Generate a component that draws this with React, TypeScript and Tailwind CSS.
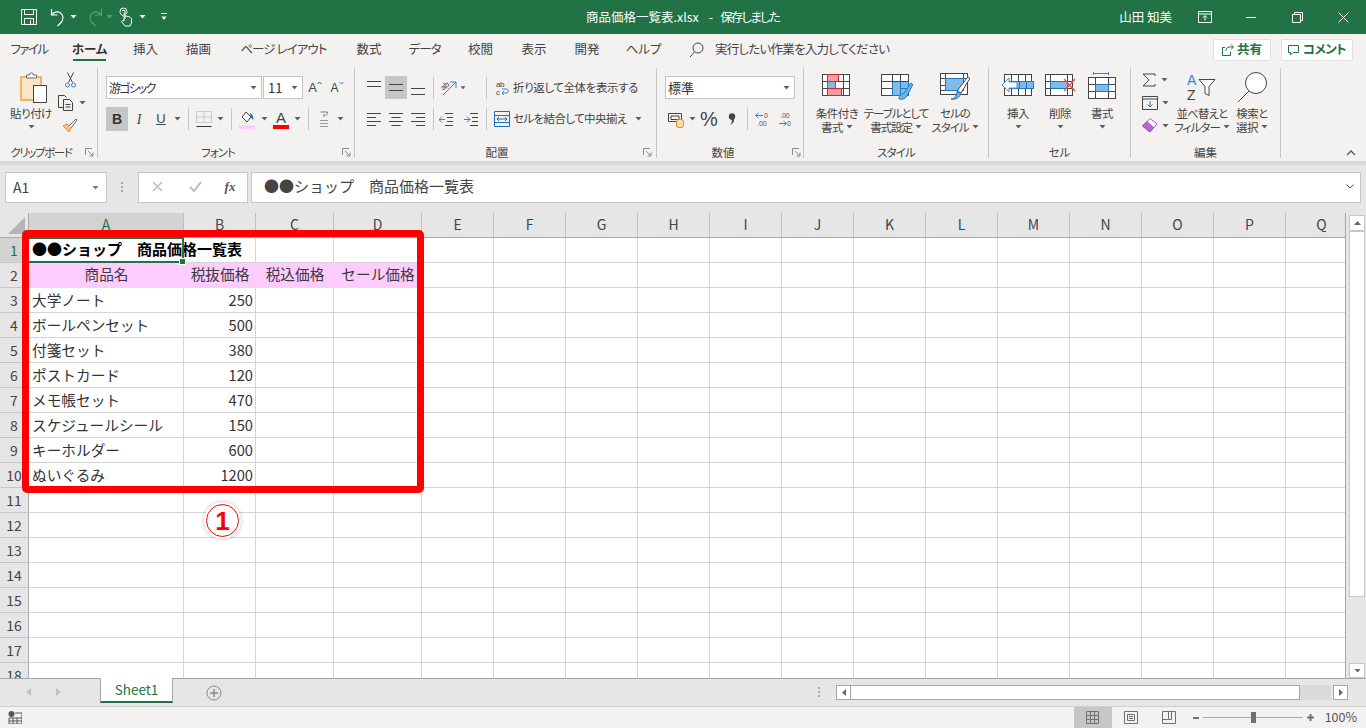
import React from "react";

const Caret = ({ c = "#5f5f5f" }: { c?: string }) => (
  <svg width="7" height="4" viewBox="0 0 7 4"><path d="M0.5 0h6L3.5 3.5z" fill={c} /></svg>
);
const Launcher = () => (
  <svg width="9" height="9" viewBox="0 0 9 9" fill="none" stroke="#8a8a8a">
    <path d="M0.5 7V0.5H7" /><path d="M3 3l4.5 4.5M8 4.5V8H4.5" />
  </svg>
);
const Sep = () => <div className="w-px h-[22px] bg-[#c6c6c6]" />;
const Box = ({ w, children, active }: { w: string; children?: React.ReactNode; active?: boolean }) => (
  <div className={`${w} ${active ? "bg-[#c6c6c6]" : ""} h-full flex items-center justify-center shrink-0`}>{children}</div>
);

const HLines = ({ ys }: { ys: number[] }) => (
  <svg width="15" height="15" viewBox="0 0 15 15" stroke="#444" fill="none">
    {ys.map((y) => <path key={y} d={`M0 ${y + 0.5}H14`} />)}
  </svg>
);
const AlignL = ({ kind }: { kind: "l" | "c" | "r" }) => {
  const d = kind === "l" ? ["M0 1.5H14", "M0 5.5H9", "M0 9.5H14", "M0 13.5H9"] : kind === "c" ? ["M0 1.5H14", "M2.5 5.5H11.5", "M0 9.5H14", "M2.5 13.5H11.5"] : ["M0 1.5H14", "M5 5.5H14", "M0 9.5H14", "M5 13.5H14"];
  return <svg width="15" height="15" viewBox="0 0 15 15" stroke="#444" fill="none">{d.map((p) => <path key={p} d={p} />)}</svg>;
};

const BigGrid = ({ children }: { children?: React.ReactNode }) => (
  <svg width="36" height="32" viewBox="0 0 36 32" fill="none">{children}</svg>
);

const IconCond = () => (
  <BigGrid>
    <rect x="3.5" y="3.5" width="27" height="21" fill="#fff" stroke="#444" />
    <path d="M3.5 10.5h27M3.5 17.5h27M24.500 3.500v21" stroke="#444" />
    <rect x="8.5" y="3.5" width="11" height="7" fill="#ff9aa2" stroke="#d9232e" />
    <rect x="8.5" y="10.5" width="8" height="7" fill="#7fbae8" stroke="#1f77c0" />
    <rect x="8.5" y="17.5" width="14" height="7" fill="#ff9aa2" stroke="#d9232e" />
  </BigGrid>
);
const IconTable = () => (
  <BigGrid>
    <rect x="3.5" y="3.5" width="27" height="21" fill="#fff" stroke="#444" />
    <rect x="14.5" y="10.5" width="16" height="14" fill="#7fbae8" stroke="#1f77c0" />
    <path d="M3.5 10.5h27M3.5 17.5h11M14.5 3.5v7M22.5 3.5v7" stroke="#444" />
    <path d="M22.500 17.500h8M22.500 10.500v14" stroke="#1f77c0" />
    <path d="M21 28c0-4 3-5 5-6l6-9c1-1.500 3-.5 2.500 1l-5 10c-1 3-5 5-8.500 4z" fill="#6fb0e6" stroke="#1f77c0" />
  </BigGrid>
);
const IconStyle = () => (
  <BigGrid>
    <rect x="3.500" y="2.500" width="27" height="21" fill="#fff" stroke="#444" />
    <path d="M3.500 7.500h27M3.500 14.500h5M3.500 19.500h5M8.500 2.500v5M26.500 2.500v5" stroke="#444" />
    <rect x="8.500" y="7.500" width="18" height="12" fill="#7fbae8" stroke="#1f77c0" />
    <path d="M20 20l10-13c1-1.500 3-.5 2.500 1L24 22z" fill="#fff" stroke="#444" />
    <path d="M14 28c3 0 5-2 6-7l4 1c-1 4-5 7-10 6z" fill="#6fb0e6" stroke="#1f77c0" />
  </BigGrid>
);
const IconInsert = () => (
  <svg width="34" height="32" viewBox="0 0 34 32" fill="none">
    <rect x="3.500" y="3.500" width="27" height="21" fill="#fff" stroke="#444" />
    <path d="M3.500 10.500h27M3.500 17.500h27M10.500 3.500v21M17.500 3.500v21M24.500 3.500v21" stroke="#444" />
    <rect x="9.500" y="10.500" width="23" height="7" fill="#7fbae8" stroke="#1f77c0" />
    <path d="M18.500 10.500v7M25.500 10.500v7" stroke="#1f77c0" />
    <path d="M8 7L1 14l7 7v-4h8v-6H8z" fill="#fff" stroke="#3b95dc" />
  </svg>
);
const IconDelete = () => (
  <svg width="34" height="32" viewBox="0 0 34 32" fill="none">
    <rect x="2.500" y="3.500" width="27" height="21" fill="#fff" stroke="#444" />
    <path d="M2.500 10.500h27M2.500 17.500h27M7.500 3.500v21M24.500 3.500v21" stroke="#444" />
    <rect x="7.500" y="10.500" width="17" height="7" fill="#7fbae8" stroke="#1f77c0" />
    <path d="M21 8l11 12M32 8L21 20" stroke="#f0494c" strokeWidth="1.300" />
  </svg>
);
const IconFormat = () => (
  <svg width="30" height="32" viewBox="0 0 30 32" fill="none">
    <path d="M6.500 1v3M6.500 2.500h15M21.500 1v3" stroke="#2f86d0" />
    <rect x="1.500" y="6.500" width="27" height="21" fill="#fff" stroke="#444" />
    <path d="M1.500 13.500h27M1.500 20.500h27M8.500 6.500v21M21.500 6.500v21" stroke="#444" />
    <rect x="8.500" y="13.500" width="13" height="7" fill="#7fbae8" stroke="#1f77c0" />
  </svg>
);

const BigBtn = ({ w, icon, l1, l2, caret2, track }: { w: string; icon: React.ReactNode; l1: string; l2?: string; caret2?: boolean; track?: string }) => (
  <div className={`${w} flex flex-col items-center shrink-0 text-[11.5px] ${track ?? "tracking-[-0.5px]"}`}>
    <div className="h-[38px] flex items-center justify-center">{icon}</div>
    <div className="h-[14px] leading-[14px] whitespace-nowrap">{l1}</div>
    <div className="h-[14px] leading-[14px] whitespace-nowrap flex items-center gap-[3px]">
      {l2 && <span>{l2}</span>}
      {caret2 && <Caret />}
    </div>
  </div>
);

const Combo = ({ w, text, textClass }: { w: string; text: string; textClass?: string }) => (
  <div className={`${w} h-[23px] bg-white border border-[#c6c6c6] flex items-center justify-between pl-[2px] pr-[4px] shrink-0`}>
    <span className={`text-[#333] ${textClass ?? "text-[12px]"}`}>{text}</span>
    <Caret />
  </div>
);

const Group = ({ w, label, labelW, launcher, children, labelTrack }: { w: string; label: string; labelW: string; launcher?: boolean; children: React.ReactNode; labelTrack?: string }) => (
  <div className={`${w} h-[90px] border-r border-[#c6c6c6] flex flex-col shrink-0`}>
    <div className="h-[78px]">{children}</div>
    <div className="h-[12px] flex items-center">
      <div className={`${labelW} ${labelTrack ?? ""} text-center text-[11.5px] leading-[12px] text-[#444] whitespace-nowrap`}>{label}</div>
      {launcher && <div className="flex-1 flex justify-center"><Launcher /></div>}
    </div>
  </div>
);

const tabs: [string, string][] = [
  ["ファイル", "w-[58px] tracking-[-1.6px]"], ["ホーム", "w-[63px]"], ["挿入", "w-[49px]"], ["描画", "w-[57px]"], ["ページ レイアウト", "w-[113px] tracking-[-0.9px]"],
  ["数式", "w-[58px]"], ["データ", "w-[53px] tracking-[-1px]"], ["校閲", "w-[59px]"], ["表示", "w-[48px]"], ["開発", "w-[58px]"], ["ヘルプ", "w-[55px]"],
];

const colNames = ["A", "B", "C", "D", "E", "F", "G", "H", "I", "J", "K", "L", "M", "N", "O", "P", "Q"];
const items: [string, string][] = [
  ["大学ノート", "250"], ["ボールペンセット", "500"], ["付箋セット", "380"], ["ポストカード", "120"],
  ["メモ帳セット", "470"], ["スケジュールシール", "150"], ["キーホルダー", "600"], ["ぬいぐるみ", "1200"],
];
const heads = ["商品名", "税抜価格", "税込価格", "セール価格"];

const Sheet = () => {
  const rows = Array.from({ length: 18 }, (_, i) => i + 1);
  return (
    <div className="flex-1 min-w-0 overflow-hidden grid grid-cols-[29px_155px_72px_78px_88px_repeat(13,72px)] auto-rows-[25px] bg-white">
      <div className="bg-[#e6e6e6] border-r border-b border-[#ababab] flex items-end justify-end pr-[3px] pb-[3px]">
        <svg width="17" height="17" viewBox="0 0 17 17"><path d="M17 0v17H0z" fill="#b5b5b5" /></svg>
      </div>
      {colNames.map((c, i) => (
        <div key={c} className={`${i === 0 ? "bg-[#d2d2d2] text-[#217346]" : "bg-[#e6e6e6] text-[#444]"} border-r border-b border-r-[#c0c0c0] border-b-[#ababab] flex items-center justify-center pb-[1px] text-[14px]`}>
          {c}
        </div>
      ))}
      {rows.map((r) => (
        <React.Fragment key={r}>
          <div className={`${r === 1 ? "bg-[#d2d2d2] text-[#217346]" : "bg-[#e6e6e6] text-[#444]"} border-r border-b border-r-[#ababab] border-b-[#c6c6c6] flex items-center justify-center text-[14px]`}>
            {r}
          </div>
          {colNames.map((_, ci) => {
            const item = r >= 3 && r <= 10 ? items[r - 3] : null;
            if (r === 1 && ci === 0) {
              return (
                <div key={ci} className="relative z-10 border-r border-b border-[#d4d4d4] flex items-center pl-[3px] pb-[1px] text-[15px] font-bold text-black whitespace-nowrap">
                  <span className="relative">●●ショップ　商品価格一覧表</span>
                  <div className="absolute top-[-1px] left-0 right-[-1px] bottom-[-1px] border-y-2 border-r-2 border-[#217346]" />
                  <div className="absolute right-[-3px] bottom-[-3px] w-[5px] h-[5px] bg-[#217346] border border-white box-content" />
                </div>
              );
            }
            if (r === 2 && ci < 4) {
              return (
                <div key={ci} className="bg-[#ffccff] flex items-center justify-center pb-[3px] text-[14.67px] text-[#3a3a3a] whitespace-nowrap overflow-hidden">
                  {heads[ci]}
                </div>
              );
            }
            if (item && ci === 0) {
              return <div key={ci} className="border-r border-b border-[#d4d4d4] flex items-center pl-[3px] pb-[1px] text-[14.67px] text-[#333] whitespace-nowrap">{item[0]}</div>;
            }
            if (item && ci === 1) {
              return <div key={ci} className="border-r border-b border-[#d4d4d4] flex items-center justify-end pr-[2px] text-[14.67px] text-[#333]">{item[1]}</div>;
            }
            return <div key={ci} className="border-r border-b border-[#d4d4d4]" />;
          })}
        </React.Fragment>
      ))}
    </div>
  );
};

export default function App() {
  return (
    <div className="relative w-[1366px] h-[728px] overflow-hidden flex flex-col bg-[#e6e6e6] text-[12px] text-[#444] [font-family:'Noto_Sans_CJK_JP','Noto_Sans',sans-serif] [font-feature-settings:'palt']">
      {/* Title bar */}
      <div className="h-[34px] shrink-0 bg-[#217346] flex items-center text-white">
        <div className="flex-1 flex items-center">
          <Box w="w-[58px]">
            <svg width="18" height="18" viewBox="0 0 18 18" fill="none" stroke="#fff">
              <path d="M1.500 1.500h15v15h-15z" /><path d="M4.500 1.500v5h9v-5M4.500 16.500v-6h9v6M10.500 12v4.500" />
            </svg>
          </Box>
          <svg width="16" height="20" viewBox="0 0 16 20" fill="none" stroke="#fff" strokeWidth="1.200" className="ml-[-8px]">
            <path d="M1.500 2v6h6" /><path d="M1.500 8c2-3 6-4 9-2s3 6 1 9l-4 4" />
          </svg>
          <span className="ml-[4px]"><Caret c="#fff" /></span>
          <svg width="16" height="20" viewBox="0 0 16 20" fill="none" stroke="#5d9c7b" strokeWidth="1.200" className="ml-[10px]">
            <path d="M14.500 2v6h-6" /><path d="M14.500 8c-2-3-6-4-9-2s-3 6-1 9l4 4" />
          </svg>
          <span className="ml-[3px]"><Caret c="#5d9c7b" /></span>
          <svg width="14" height="20" viewBox="0 0 14 20" fill="none" stroke="#fff" className="ml-[6px]">
            <path d="M4 9c-2-1-3-3-3-4.500a3.500 3.500 0 0 1 7 0c0 1-.5 2-1 2.500" /><path d="M3 3.500h3v8.500M6 9c2 0 6 1 6.500 2.500V16l-1.500 3H6L2.500 14.500l1-1L5 14V6" />
          </svg>
          <span className="ml-[6px]"><Caret c="#fff" /></span>
          <svg width="8" height="8" viewBox="0 0 8 8" className="ml-[14px]" stroke="#fff" fill="#fff">
            <path d="M1 .5h6" fill="none" /><path d="M1.500 3.500h5L4 7z" stroke="none" />
          </svg>
        </div>
        <div className="shrink-0 text-[12.5px] whitespace-pre flex w-[194px]">
          <span>商品価格一覧表.xlsx</span>
          <span className="ml-[10px]">-</span>
          <span className="ml-[7px] tracking-[-1.8px]">保存しました</span>
        </div>
        <div className="flex-1 flex items-center justify-end">
          <span className="text-[12.5px] mr-[10px]">山田 知美</span>
          <Box w="w-[46px]">
            <svg width="14" height="12" viewBox="0 0 14 12" fill="none" stroke="#fff"><path d="M.5 .5h13v11H.5zM.5 3h13" /><path d="M7 9.500V5M5 6.500L7 4.500l2 2" /></svg>
          </Box>
          <Box w="w-[46px]"><div className="w-[10px] h-px bg-white" /></Box>
          <Box w="w-[46px]">
            <svg width="11" height="11" viewBox="0 0 11 11" fill="none" stroke="#fff"><path d="M.5 2.500h8v8h-8zM2.500 2.500v-2h8v8h-2" /></svg>
          </Box>
          <Box w="w-[46px]">
            <svg width="11" height="11" viewBox="0 0 11 11" fill="none" stroke="#fff"><path d="M.5 .5l10 10M10.500 .5l-10 10" /></svg>
          </Box>
        </div>
      </div>

      {/* Tabs */}
      <div className="h-[31px] shrink-0 bg-[#f3f2f1] flex items-center text-[12.5px]">
        {tabs.map(([t, w]) => (
          <div key={t} className={`${w} h-full flex items-center justify-center relative whitespace-nowrap shrink-0 ${t === "ホーム" ? "font-bold text-[#333]" : ""}`}>
            {t}
            {t === "ホーム" && <div className="absolute bottom-[4px] left-[15px] right-[15px] h-[2px] bg-[#217346]" />}
          </div>
        ))}
        <svg width="15" height="16" viewBox="0 0 15 16" fill="none" stroke="#444" className="ml-[18px]">
          <circle cx="9" cy="6" r="5" /><path d="M5.500 10L1 15" />
        </svg>
        <span className="ml-[11px] tracking-[-0.75px]">実行したい作業を入力してください</span>
        <div className="flex-1" />
        <div className="w-[58px] h-[22px] bg-white border border-[#e2e2e2] rounded-[2px] flex items-center justify-center gap-[3px] text-[#217346] font-bold">
          <svg width="12" height="12" viewBox="0 0 12 12" fill="none" stroke="#217346"><path d="M9 .5l2.500 2.500L9 5.500M11 3H7C5 3 4 4.500 4 7" /><path d="M8.500 7.500v4h-8v-8H3" /></svg>
          共有
        </div>
        <div className="ml-[10px] mr-[13px] w-[72px] h-[22px] bg-white border border-[#e2e2e2] rounded-[2px] flex items-center justify-center gap-[3px] text-[#217346] font-bold tracking-[-0.5px]">
          <svg width="12" height="12" viewBox="0 0 12 12" fill="none" stroke="#217346"><path d="M.5 1.500h10v7H5L2.500 11V8.500h-2z" /></svg>
          コメント
        </div>
      </div>

      {/* Ribbon */}
      <div className="h-[96px] shrink-0 bg-[#f3f2f1] pt-[3px] flex">
        <Group w="w-[98px]" label="クリップボード" labelW="w-[82px]" labelTrack="tracking-[-1.4px]" launcher>
          <div className="flex">
            <BigBtn
              w="w-[62px]"
              l1="貼り付け"
              icon={
                <svg width="30" height="34" viewBox="0 0 30 34" fill="none" className="ml-[3px]">
                  <rect x="3" y="7" width="20" height="23" fill="#fbe5c8" stroke="#f2a13c" strokeWidth="1.500" />
                  <path d="M8.500 8V5h3a2 2 0 0 1 4 0h3v3z" fill="#fff" stroke="#666" />
                  <rect x="15.500" y="15.500" width="13" height="17" fill="#fff" stroke="#444" />
                </svg>
              }
              caret2
            />
            <div className="flex flex-col">
              <div className="h-[23px] w-[26px] ml-[-5px] flex items-center justify-center">
                <svg width="11" height="16" viewBox="0 0 11 16" fill="none">
                  <path d="M2.500 .5l5 10M8.500 .5l-5 10" stroke="#444" /><circle cx="2.500" cy="13" r="2" stroke="#2f86d0" /><circle cx="8.500" cy="13" r="2" stroke="#2f86d0" />
                </svg>
              </div>
              <div className="h-[23px] ml-[-4px] flex items-center gap-[5px]">
                <svg width="16" height="16" viewBox="0 0 16 16" fill="none" stroke="#444"><path d="M5 12.500H.5V.5h6l2 2" /><path d="M5.500 4.500h6l3 3v8h-9zM7.500 9.500h5M7.500 12h5" /></svg>
                <Caret />
              </div>
              <div className="h-[23px] w-[26px] ml-[-5px] flex items-center justify-center">
                <svg width="16" height="15" viewBox="0 0 16 15" fill="none">
                  <path d="M1 8l6 6 2-4-4-4z" fill="#fbc27a" stroke="#ec8a1d" /><path d="M7 8l7-7 1 1-6 8" fill="#fff" stroke="#666" />
                </svg>
              </div>
            </div>
          </div>
        </Group>

        <Group w="w-[257px]" label="フォント" labelW="w-[240px]" labelTrack="tracking-[-1px]" launcher>
          <div className="pt-[8px] pl-[8px] flex flex-col gap-[8px]">
            <div className="h-[23px] flex">
              <Combo w="w-[156px]" text="游ゴシック" textClass="text-[12px] tracking-[-1.8px]" />
              <Combo w="w-[40px] ml-[1px]" text="11" textClass="text-[13px] pl-[2px]" />
              <Box w="w-[22px] ml-[1px]">
                <span className="text-[13px] [font-family:'Liberation_Sans',sans-serif]">A</span>
                <svg width="5" height="4" viewBox="0 0 5 4" fill="none" stroke="#444" className="mb-[9px]"><path d="M.5 3L2.500 1l2 2" /></svg>
              </Box>
              <Box w="w-[22px]">
                <span className="text-[12px] [font-family:'Liberation_Sans',sans-serif]">A</span>
                <svg width="5" height="4" viewBox="0 0 5 4" fill="none" stroke="#2f86d0" className="mb-[9px]"><path d="M.5 1L2.500 3l2-2" /></svg>
              </Box>
            </div>
            <div className="h-[24px] flex">
              <Box w="w-[22px]" active><span className="font-bold text-[14px] text-[#333] [font-family:'Liberation_Sans',sans-serif]">B</span></Box>
              <Box w="w-[22px]"><span className="italic text-[14px] [font-family:'Liberation_Serif',serif]">I</span></Box>
              <Box w="w-[22px]"><span className="underline text-[13px] [font-family:'Liberation_Sans',sans-serif]">U</span></Box>
              <Box w="w-[10px]"><Caret /></Box>
              <Box w="w-[12px]"><Sep /></Box>
              <Box w="w-[19px]">
                <svg width="16" height="16" viewBox="0 0 16 16" fill="none">
                  <path d="M.5 .5h15v11H.5zM8 .5v11M.5 6h15" stroke="#aaa" strokeDasharray="1 1" /><path d="M.5 15.500h15" stroke="#333" />
                </svg>
              </Box>
              <Box w="w-[14px]"><Caret /></Box>
              <Box w="w-[8px]"><Sep /></Box>
              <Box w="w-[24px]">
                <svg width="16" height="19" viewBox="0 0 16 19" fill="none">
                  <path d="M3 7l4-5 5 5-4 5z" fill="#fff" stroke="#444" /><path d="M11 3c2 1 4 3 3 7-1-1-3-3-3-7z" fill="#1f77c0" /><rect y="15" width="16" height="4" fill="#ffccff" />
                </svg>
              </Box>
              <Box w="w-[10px]"><Caret /></Box>
              <Box w="w-[24px]">
                <div className="flex flex-col items-center">
                  <span className="text-[15px] leading-[15px] [font-family:'Liberation_Sans',sans-serif]">A</span>
                  <div className="w-[16px] h-[4px] bg-[#ff0000]" />
                </div>
              </Box>
              <Box w="w-[8px]"><Caret /></Box>
              <Box w="w-[14px]"><Sep /></Box>
              <Box w="w-[18px]">
                <svg width="10" height="17" viewBox="0 0 10 17" fill="none" stroke="#777"><path d="M1.500 1h7c0 2-1 3-2 4M5 3v3" /><path d="M1 9.500h8M1 12.500h8M1 15.500h8" stroke="#999" /></svg>
              </Box>
              <Box w="w-[14px]"><Caret /></Box>
            </div>
          </div>
        </Group>

        <Group w="w-[302px]" label="配置" labelW="w-[284px]" launcher>
          <div className="pt-[8px] pl-[8px] flex flex-col gap-[8px] text-[11.5px] tracking-[-0.4px]">
            <div className="h-[23px] flex items-center">
              <Box w="w-[22px]"><HLines ys={[1, 6]} /></Box>
              <Box w="w-[22px]" active><HLines ys={[4, 10]} /></Box>
              <Box w="w-[22px]"><HLines ys={[8, 14]} /></Box>
              <Box w="w-[8px]"><Sep /></Box>
              <Box w="w-[23px]">
                <svg width="16" height="16" viewBox="0 0 16 16" fill="none" className="overflow-visible">
                  <path d="M2 15L15 2M9 2h6v6" stroke="#2f86d0" /><text x="1" y="9" fontSize="8" fill="#444" transform="rotate(-40 4 8)" fontFamily="Liberation Sans">ab</text>
                </svg>
              </Box>
              <Box w="w-[6px]"><Caret /></Box>
              <div className="ml-[20px] w-px h-[22px] bg-[#c6c6c6]" />
              <svg width="14" height="16" viewBox="0 0 14 16" fill="none" className="ml-[9px]">
                <text x="0" y="7" fontSize="8" fill="#444" fontFamily="Liberation Sans">ab</text>
                <text x="0" y="15" fontSize="8" fill="#444" fontFamily="Liberation Sans">c</text>
                <path d="M7 13h3c3 0 3-4 0-4H6M8 11l-2 2 2 2" stroke="#2f86d0" />
              </svg>
              <span className="ml-[3px] whitespace-nowrap">折り返して全体を表示する</span>
            </div>
            <div className="h-[24px] flex items-center">
              <Box w="w-[22px]"><AlignL kind="l" /></Box>
              <Box w="w-[22px]"><AlignL kind="c" /></Box>
              <Box w="w-[22px]"><AlignL kind="r" /></Box>
              <Box w="w-[8px]"><Sep /></Box>
              <Box w="w-[21px] ml-[-1px]">
                <svg width="15" height="14" viewBox="0 0 15 14" fill="none"><path d="M6 1.500h8M8 5.500h6M8 9.500h6M6 13.500h8" stroke="#444" /><path d="M6 7.500H0M3 4.500l-3 3 3 3" stroke="#2f86d0" /></svg>
              </Box>
              <Box w="w-[24px] ml-[2px]">
                <svg width="15" height="14" viewBox="0 0 15 14" fill="none"><path d="M6 1.500h8M8 5.500h6M8 9.500h6M6 13.500h8" stroke="#444" /><path d="M0 7.500h6M3 4.500l3 3-3 3" stroke="#2f86d0" /></svg>
              </Box>
              <div className="ml-[3px] w-px h-[22px] bg-[#c6c6c6]" />
              <svg width="16" height="16" viewBox="0 0 16 16" fill="none" className="ml-[7px]">
                <path d="M.5 .5h15v15H.5z" stroke="#1f6fb5" /><path d="M.5 4.500h15M.5 11.500h15" stroke="#1f6fb5" /><path d="M3 8h10M5 6L3 8l2 2M11 6l2 2-2 2" stroke="#1f6fb5" />
              </svg>
              <span className="ml-[3px] whitespace-nowrap tracking-[-0.6px]">セルを結合して中央揃え</span>
              <span className="ml-[8px]"><Caret /></span>
            </div>
          </div>
        </Group>

        <Group w="w-[147px]" label="数値" labelW="w-[132px]" launcher>
          <div className="pt-[8px] pl-[8px] flex flex-col gap-[8px]">
            <Combo w="w-[130px]" text="標準" textClass="text-[13px]" />
            <div className="h-[24px] flex items-center">
              <Box w="w-[22px]">
                <svg width="16" height="17" viewBox="0 0 16 17" fill="none">
                  <path d="M.5 2.500h13v8H.5z" stroke="#444" /><path d="M3 5h8v3.500H3z" stroke="#444" /><rect x="8.500" y="8.500" width="7" height="8" rx="2" fill="#fbd9a8" stroke="#ec8a1d" />
                </svg>
              </Box>
              <Box w="w-[10px]"><Caret /></Box>
              <Box w="w-[24px]"><span className="text-[20px] [font-family:'Liberation_Sans',sans-serif]">%</span></Box>
              <Box w="w-[22px]">
                <svg width="8" height="12" viewBox="0 0 8 12" fill="#444"><circle cx="4" cy="3.500" r="3.200" /><path d="M5 4c2 3 1 6-3 8 2-2 2.500-4 1-7z" /></svg>
              </Box>
              <Box w="w-[8px]"><Sep /></Box>
              <Box w="w-[23px]">
                <svg width="15" height="17" viewBox="0 0 15 17" fill="none">
                  <path d="M8 4.500H1M3.500 2l-3 2.500 3 2.500" stroke="#2f86d0" />
                  <text x="9" y="7" fontSize="7" fill="#555" fontFamily="Liberation Sans">0</text>
                  <text x="2" y="15" fontSize="7" fill="#555" fontFamily="Liberation Sans">.00</text>
                </svg>
              </Box>
              <Box w="w-[23px]">
                <svg width="15" height="17" viewBox="0 0 15 17" fill="none">
                  <path d="M1 12.500h7M5.500 10l3 2.500-3 2.500" stroke="#2f86d0" />
                  <text x="2" y="7" fontSize="7" fill="#555" fontFamily="Liberation Sans">.00</text>
                  <text x="9" y="15" fontSize="7" fill="#555" fontFamily="Liberation Sans">0</text>
                </svg>
              </Box>
            </div>
          </div>
        </Group>

        <Group w="w-[185px]" label="スタイル" labelW="w-full" labelTrack="tracking-[-0.8px]">
          <div className="flex pl-[8px]">
            <BigBtn w="w-[50px]" l1="条件付き" l2="書式" caret2 icon={<IconCond />} />
            <BigBtn w="w-[68px]" l1="テーブルとして" l2="書式設定" caret2 track="tracking-[-1.1px]" icon={<IconTable />} />
            <BigBtn w="w-[50px]" l1="セルの" l2="スタイル" caret2 track="tracking-[-1px]" icon={<IconStyle />} />
          </div>
        </Group>

        <Group w="w-[142px]" label="セル" labelW="w-full">
          <div className="flex pl-[8px]">
            <BigBtn w="w-[42px]" l1="挿入" caret2 icon={<IconInsert />} />
            <BigBtn w="w-[42px]" l1="削除" caret2 icon={<IconDelete />} />
            <BigBtn w="w-[42px]" l1="書式" caret2 icon={<IconFormat />} />
          </div>
        </Group>

        <Group w="w-[150px]" label="編集" labelW="w-full">
          <div className="flex">
            <div className="w-[44px] pl-[11px] flex flex-col shrink-0">
              <div className="h-[23px] flex items-center gap-[5px]">
                <svg width="14" height="14" viewBox="0 0 14 14" fill="none" stroke="#444"><path d="M13 3V1H1l6 6-6 6h12v-2" /></svg>
                <Caret />
              </div>
              <div className="h-[23px] flex items-center gap-[4px]">
                <svg width="16" height="14" viewBox="0 0 16 14" fill="none"><path d="M.5 .5h15v13H.5zM.5 3h15" stroke="#444" /><path d="M8 5v6M5.500 8.500L8 11l2.500-2.500" stroke="#1f77c0" /></svg>
                <Caret />
              </div>
              <div className="h-[23px] flex items-center gap-[4px]">
                <svg width="16" height="15" viewBox="0 0 16 15" fill="none"><path d="M.5 8L8 .5 15 6l-7 8z" fill="#fff" stroke="#a55ac2" /><path d="M.5 8L5 3.500l6.500 6L8 14z" fill="#b665cf" stroke="#a55ac2" /></svg>
                <Caret />
              </div>
            </div>
            <BigBtn
              w="w-[54px]"
              l1="並べ替えと"
              l2="フィルター"
              caret2
              track="tracking-[-0.9px]"
              icon={
                <svg width="30" height="30" viewBox="0 0 30 30" fill="none">
                  <text x="0" y="13" fontSize="14" fill="#2f86d0" fontFamily="Liberation Sans">A</text>
                  <text x="0" y="28" fontSize="14" fill="#444" fontFamily="Liberation Sans">Z</text>
                  <path d="M12 7.500h16l-6 7v9l-4-2v-7z" fill="#fff" stroke="#444" />
                </svg>
              }
            />
            <BigBtn
              w="w-[46px]"
              l1="検索と"
              l2="選択"
              caret2
              icon={
                <svg width="32" height="32" viewBox="0 0 32 32" fill="none" stroke="#444">
                  <circle cx="20" cy="12" r="10.500" fill="#fff" /><path d="M13 20L2 31" />
                </svg>
              }
            />
          </div>
        </Group>

        <div className="flex-1 flex items-end justify-end pr-[10px] pb-[5px]">
          <svg width="10" height="6" viewBox="0 0 10 6" fill="none" stroke="#555" strokeWidth="1.300"><path d="M1 5l4-4 4 4" /></svg>
        </div>
      </div>

      {/* Ribbon shadow */}
      <div className="h-[4px] shrink-0 bg-[#d9d9d9]" />

      {/* Formula bar */}
      <div className="h-[48px] shrink-0 flex items-start pt-[7px] pl-[5px] pr-[5px] bg-[#e6e6e6]">
        <div className="w-[102px] h-[31px] bg-white border border-[#c6c6c6] flex items-center justify-between pl-[7px] pr-[7px] text-[14px] text-[#444]">
          A1
          <Caret c="#777" />
        </div>
        <div className="w-[31px] h-[31px] flex items-center justify-center">
          <svg width="3" height="11" viewBox="0 0 3 11" fill="#a8a8a8"><rect width="2" height="2" /><rect y="4" width="2" height="2" /><rect y="8" width="2" height="2" /></svg>
        </div>
        <div className="w-[110px] h-[31px] bg-white border border-[#c6c6c6] flex items-center pb-[2px]">
          <div className="w-[36px] flex justify-center">
            <svg width="11" height="11" viewBox="0 0 11 11" fill="none" stroke="#bdbdbd" strokeWidth="1.500"><path d="M1 1l9 9M10 1l-9 9" /></svg>
          </div>
          <div className="w-[36px] flex justify-center ml-[2px]">
            <svg width="13" height="11" viewBox="0 0 13 11" fill="none" stroke="#bdbdbd" strokeWidth="2"><path d="M1 6l4 4 7-9" /></svg>
          </div>
          <div className="w-[34px] flex justify-center text-[13px] italic font-bold text-[#555] [font-family:'Liberation_Serif',serif]">fx</div>
        </div>
        <div className="ml-[3px] flex-1 h-[31px] bg-white border border-[#c6c6c6] flex items-center justify-between pl-[12px] pr-[6px] pb-[3px] text-[15px] text-[#444] [font-feature-settings:normal]">
          <span>●●ショップ　商品価格一覧表</span>
          <svg width="8" height="5" viewBox="0 0 8 5" fill="none" stroke="#555"><path d="M.5 .5L4 4l3.500-3.500" /></svg>
        </div>
      </div>

      {/* Grid and vertical scrollbar */}
      <div className="h-[466px] shrink-0 flex overflow-hidden border-b border-[#a6a6a6] [font-feature-settings:normal]">
        <Sheet />
        <div className="w-[21px] shrink-0 bg-[#e6e6e6] border-l border-[#a6a6a6] flex flex-col items-center pt-[2px] pl-[2px]">
          <div className="w-[16px] h-[16px] bg-white border border-[#c6c6c6] flex items-center justify-center">
            <svg width="7" height="4" viewBox="0 0 7 4"><path d="M3.500 0L7 4H0z" fill="#666" /></svg>
          </div>
          <div className="w-[16px] h-[366px] bg-white border border-[#c6c6c6]" />
          <div className="flex-1" />
          <div className="w-[16px] h-[15px] bg-white border border-[#c6c6c6] flex items-center justify-center">
            <Caret c="#666" />
          </div>
        </div>
      </div>

      {/* Sheet tabs and horizontal scrollbar */}
      <div className="h-[27px] shrink-0 bg-[#e6e6e6] flex items-center">
        <div className="w-[100px] flex items-center pl-[26px] gap-[24px] shrink-0">
          <svg width="6" height="9" viewBox="0 0 6 9"><path d="M5 0v8L0 4z" fill="#c0c0c0" /></svg>
          <svg width="6" height="9" viewBox="0 0 6 9"><path d="M0 0v8l5-4z" fill="#c0c0c0" /></svg>
        </div>
        <div className="self-start mt-[-1px] relative z-10 w-[73px] h-[25px] bg-white border-x border-[#a6a6a6] border-b-2 border-b-[#217346] flex items-center justify-center text-[#217346] text-[13.5px] shrink-0">
          Sheet1
        </div>
        <svg width="16" height="16" viewBox="0 0 16 16" fill="none" stroke="#8a8a8a" className="ml-[33px] shrink-0">
          <circle cx="8" cy="8" r="7" /><path d="M8 4v8M4 8h8" strokeWidth="1.500" />
        </svg>
        <div className="w-[610px] flex justify-end pr-[11px] shrink-0">
          <svg width="3" height="11" viewBox="0 0 3 11" fill="#a8a8a8"><rect width="2" height="2" /><rect y="4" width="2" height="2" /><rect y="8" width="2" height="2" /></svg>
        </div>
        <div className="ml-[4px] flex items-center w-[495px] h-[15px] shrink-0">
          <div className="w-[15px] h-full bg-white border border-[#a6a6a6] flex items-center justify-center">
            <svg width="4" height="7" viewBox="0 0 4 7"><path d="M4 0v7L0 3.500z" fill="#666" /></svg>
          </div>
          <div className="w-[449px] h-full bg-white border border-[#a6a6a6] border-l-0" />
          <div className="flex-1 h-full bg-[#dadada]" />
        </div>
        <div className="ml-[2px] w-[15px] h-[15px] bg-white border border-[#a6a6a6] flex items-center justify-center shrink-0">
          <svg width="4" height="7" viewBox="0 0 4 7"><path d="M0 0v7l4-3.500z" fill="#666" /></svg>
        </div>
      </div>

      {/* Status bar */}
      <div className="h-[22px] shrink-0 bg-[#f3f2f1] border-t border-[#cfcfcf] flex items-center">
        <svg width="14" height="13" viewBox="0 0 14 13" className="ml-[8px]" fill="none">
          <circle cx="3.500" cy="3" r="3" fill="#555" /><path d="M7 2h7v11H1V7h13M1 10h13M5 7v6M9 7v6" stroke="#555" />
        </svg>
        <div className="flex-1" />
        <div className="w-[38px] h-full bg-[#c6c6c6] flex items-center justify-center">
          <svg width="13" height="13" viewBox="0 0 13 13" fill="none" stroke="#707070"><path d="M.5 .5h12v12H.5zM.5 4.500h12M.5 8.500h12M4.500 .5v12M8.500 .5v12" /></svg>
        </div>
        <Box w="w-[38px]">
          <svg width="14" height="13" viewBox="0 0 14 13" fill="none" stroke="#707070"><path d="M.5 .5h13v12H.5zM3.500 3.500h7v6h-7zM5 5.500h4M5 7.500h4" /></svg>
        </Box>
        <Box w="w-[38px]">
          <svg width="14" height="13" viewBox="0 0 14 13" fill="none" stroke="#707070"><path d="M.5 .5h13v12H.5zM.5 8.500h6v-8M6.500 8.500h3V.5" /></svg>
        </Box>
        <div className="w-[6px] h-[2px] bg-[#707070] ml-[5px]" />
        <div className="relative ml-[4px] w-[100px] h-px bg-[#a8a8a8]">
          <div className="absolute left-[48px] top-[-5px] w-[5px] h-[11px] bg-[#707070]" />
        </div>
        <svg width="7" height="7" viewBox="0 0 7 7" className="ml-[4px]" stroke="#707070" strokeWidth="2"><path d="M0 3.500h7M3.500 0v7" /></svg>
        <span className="ml-[11px] mr-[9px] text-[12.5px] text-[#555]">100%</span>
      </div>

      {/* Annotation */}
      <div className="absolute z-20 left-[22px] top-[230px] w-[402px] h-[263px] border-[7px] border-[#ff0000] rounded-[5px] pointer-events-none" />
      <div className="absolute z-20 left-[204px] top-[502px] w-[37px] h-[37px] rounded-full bg-white border-[2px] border-white shadow-[0_0_4px_rgba(0,0,0,0.25)] flex items-center justify-center">
        <div className="w-[33px] h-[33px] rounded-full border-[1.5px] border-[#ff0000] flex items-center justify-center text-[#ff0000] text-[26px] leading-none font-bold [font-family:'Liberation_Sans',sans-serif]">1</div>
      </div>
    </div>
  );
}
